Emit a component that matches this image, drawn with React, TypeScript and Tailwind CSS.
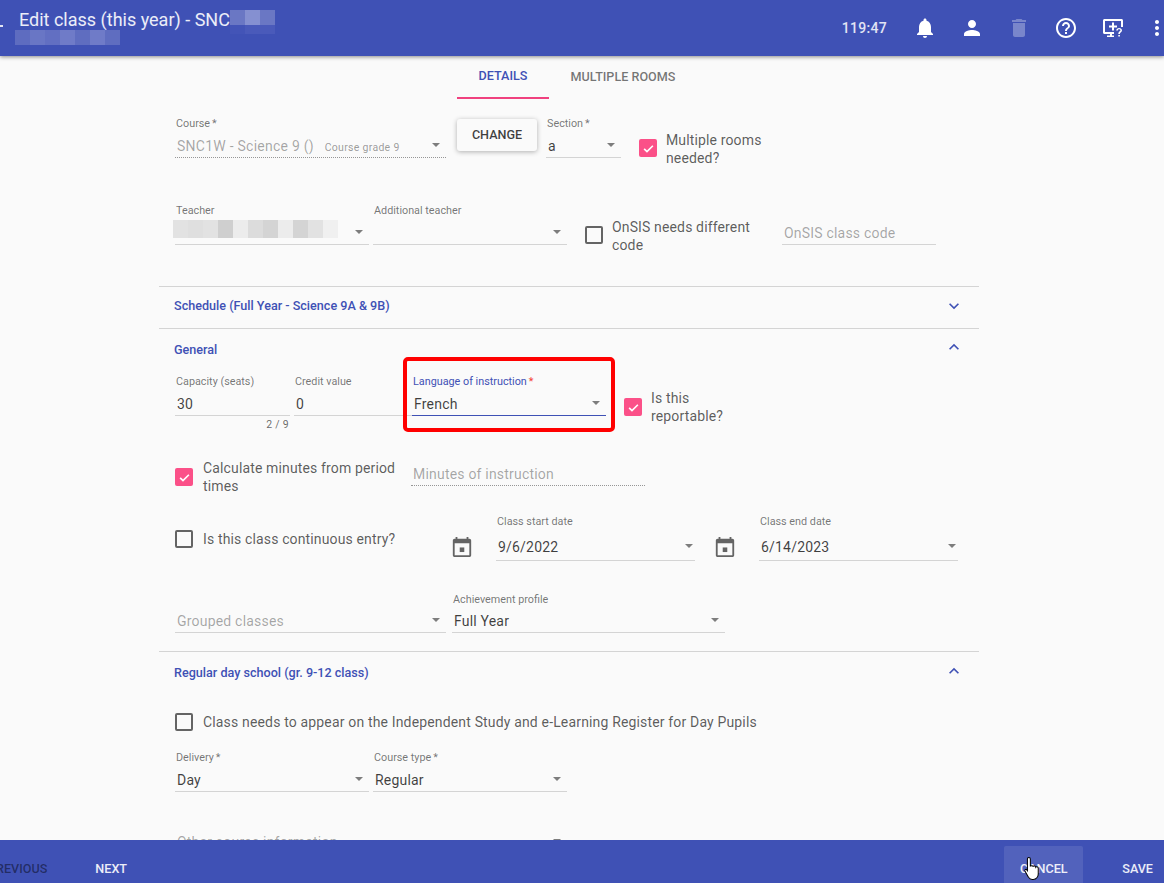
import type { ReactNode } from 'react';

const Arrow = ({ className = '' }: { className?: string }) => (
  <span className={`w-0 h-0 mt-[-4px] border-x-[4.5px] border-x-transparent border-t-[4.5px] border-t-black/50 ${className}`} />
);

const Checkbox = ({ checked = false, className = '' }: { checked?: boolean; className?: string }) =>
  checked ? (
    <span className={`flex items-center justify-center w-[18px] h-[18px] shrink-0 rounded-[2px] bg-[#fb5088] ${className}`}>
      <svg viewBox="0 0 24 24" className="w-[15px] h-[15px]" fill="none" stroke="#fff" strokeWidth="2.6">
        <path d="M5 12.5l4.6 4.6L19 7.6" />
      </svg>
    </span>
  ) : (
    <span className={`block w-[18px] h-[18px] shrink-0 rounded-[2px] border-2 border-black/60 ${className}`} />
  );

type FieldProps = {
  label?: string;
  value?: ReactNode;
  placeholder?: string;
  required?: boolean;
  arrow?: boolean;
  dotted?: boolean;
  focused?: boolean;
  className?: string;
};

const Field = ({ label, value, placeholder, required, arrow = true, dotted, focused, className = '' }: FieldProps) => (
  <div className={`shrink-0 ${className}`}>
    <div className={`h-[14px] pl-[1px] leading-[14px] text-[10.8px] whitespace-nowrap ${focused ? 'text-[#3f51b5]' : 'text-black/55'}`}>
      {label}
      {required && <span className={`ml-[2px] ${focused ? 'text-[#f44336]' : ''}`}>*</span>}
    </div>
    <div
      className={`flex items-center h-[27px] pl-[2px] pr-[6px] pt-[5px] text-[14px] border-b ${
        dotted ? 'border-dotted border-black/40' : focused ? 'border-[#3f51b5]' : 'border-black/15'
      }`}
    >
      <span className={`flex-1 whitespace-nowrap ${placeholder ? 'text-black/35 tracking-[0.2px]' : 'text-black/75 tracking-[0.2px]'}`}>
        {value ?? placeholder}
      </span>
      {arrow && <Arrow />}
    </div>
  </div>
);

const Blur = ({ colors, className = '' }: { colors: string[]; className?: string }) => (
  <span className={`flex ${className}`}>
    {colors.map((c, i) => (
      <span key={i} className="block w-[15px] h-full" style={{ backgroundColor: c }} />
    ))}
  </span>
);

const SectionHead = ({
  title,
  up = false,
  className = '',
  titleClass = '',
  chevronClass = 'pb-[4px]',
}: {
  title: string;
  up?: boolean;
  className?: string;
  titleClass?: string;
  chevronClass?: string;
}) => (
  <div className={`flex items-center pl-[15px] text-[12.6px] font-medium text-[#3f51b5] ${className}`}>
    <span className={titleClass}>{title}</span>
    <span className={`ml-auto mr-[15px] ${chevronClass}`}>
      <svg viewBox="0 0 24 24" className="block w-[20px] h-[20px]" fill="#3f51b5">
        <path d={up ? 'M12 8l-6 6 1.41 1.41L12 10.83l4.59 4.58L18 14z' : 'M16.59 8.59L12 13.17 7.41 8.59 6 10l6 6 6-6z'} />
      </svg>
    </span>
  </div>
);

const CalendarIcon = ({ className = '' }: { className?: string }) => (
  <svg viewBox="0 0 24 24" className={`w-[22px] h-[22px] shrink-0 ${className}`} fill="#000" fillOpacity="0.6">
    <path d="M20 3h-1V1h-2v2H7V1H5v2H4c-1.1 0-2 .9-2 2v16c0 1.1.9 2 2 2h16c1.1 0 2-.9 2-2V5c0-1.1-.9-2-2-2zm0 18H4V8h16v13z" />
    <path d="M9.5 12.5h5v5h-5z" />
  </svg>
);

const TopIcon = ({ d, className = '' }: { d: string; className?: string }) => (
  <svg viewBox="0 0 24 24" className={`w-[24px] h-[24px] ${className}`} fill="#fff">
    <path d={d} />
  </svg>
);

const App = () => {
  return (
    <div className="relative flex flex-col h-[883px] overflow-hidden bg-[#fafafa] font-['Roboto',sans-serif]">
      {/* Top bar */}
      <header className="relative z-10 flex items-center h-[56px] shrink-0 bg-[#3f51b5] text-white/90 shadow-[0_1px_4px_rgba(0,0,0,0.45)]">
        <span className="absolute left-0 top-[25px] w-[3px] h-[2px] bg-white/85" />
        <div className="ml-[15px] w-[300px]">
          <div className="flex items-start h-[20px] mt-[-1px]">
            <span className="ml-[4px] text-[18px] leading-[20px] whitespace-nowrap">Edit class (this year) - SNC</span>
            <div className="flex flex-col">
              <Blur colors={['#6a77c4', '#8590d1', '#6a77c4']} className="h-[15px]" />
              <Blur colors={['#4354b7', '#4a5aba', '#4a5aba']} className="h-[9px]" />
            </div>
          </div>
          <Blur colors={['#5e6cc0', '#6976c5', '#626fc2', '#6f7bc8', '#5f6dc0', '#6f7bc8', '#5f6dc0']} className="h-[15px]" />
        </div>
        <div className="ml-auto flex items-center">
          <span className="text-[14px] font-medium tracking-[0.3px] text-white/85 mr-[26px]">119:47</span>
          <TopIcon className="mr-[23px]" d="M12 22c1.1 0 2-.9 2-2h-4c0 1.1.89 2 2 2zm6-6v-5c0-3.07-1.64-5.64-4.5-6.32V4c0-.83-.67-1.5-1.5-1.5s-1.5.67-1.5 1.5v.68C7.63 5.36 6 7.92 6 11v5l-2 2v1h16v-1l-2-2z" />
          <TopIcon className="mr-[23px]" d="M12 12c2.21 0 4-1.79 4-4s-1.79-4-4-4-4 1.79-4 4 1.79 4 4 4zm0 2c-2.67 0-8 1.34-8 4v2h16v-2c0-2.66-5.33-4-8-4z" />
          <TopIcon className="mr-[23px] opacity-30" d="M6 19c0 1.1.9 2 2 2h8c1.1 0 2-.9 2-2V7H6v12zM19 4h-3.5l-1-1h-5l-1 1H5v2h14V4z" />
          <TopIcon className="mr-[23px]" d="M11 18h2v-2h-2v2zm1-16C6.48 2 2 6.48 2 12s4.48 10 10 10 10-4.48 10-10S17.52 2 12 2zm0 18c-4.41 0-8-3.59-8-8s3.59-8 8-8 8 3.59 8 8-3.59 8-8 8zm0-14c-2.21 0-4 1.79-4 4h2c0-1.1.9-2 2-2s2 .9 2 2c0 2-3 1.75-3 5h2c0-2.25 3-2.5 3-5 0-2.21-1.79-4-4-4z" />
          <svg viewBox="0 0 24 24" className="w-[24px] h-[24px] mr-[20px]" fill="#fff">
            <path d="M3.5 3h17c.8 0 1.5.7 1.5 1.5V11h-2V5H4v11h9v2h-2v1.5h2V21H6v-1.5h3V18H3.5c-.8 0-1.5-.7-1.5-1.5v-12C2 3.7 2.7 3 3.5 3z" />
            <path d="M11 6.5h2v3h3v2h-3v3h-2v-3H8v-2h3z" />
            <path d="M15.2 14.5c.1-1.6 1.3-2.6 2.9-2.6s2.9 1 2.9 2.4c0 1.9-2.1 2-2.1 3.7h-1.6c0-2.5 2.1-2.5 2.1-3.7 0-.6-.6-1-1.3-1s-1.2.4-1.3 1.2zM17.3 19h1.6v1.6h-1.6z" />
          </svg>
          <TopIcon className="mr-[-5px]" d="M12 8c1.1 0 2-.9 2-2s-.9-2-2-2-2 .9-2 2 .9 2 2 2zm0 2c-1.1 0-2 .9-2 2s.9 2 2 2 2-.9 2-2-.9-2-2-2zm0 6c-1.1 0-2 .9-2 2s.9 2 2 2 2-.9 2-2-.9-2-2-2z" />
        </div>
      </header>

      {/* Tabs */}
      <div className="flex h-[43px] shrink-0 pl-[457px] text-[12.6px] font-medium">
        <div className="flex items-center justify-center w-[92px] pb-[1px] border-b-2 border-[#f0417f] text-[#3f51b5]">DETAILS</div>
        <div className="flex items-center justify-center w-[148px] pb-[1px] text-black/55">MULTIPLE ROOMS</div>
      </div>

      {/* Form, cut off by the bottom bar */}
      <main className="flex-1 min-h-0 overflow-hidden ml-[159px] w-[820px]">
        <div className="flex items-start h-[42px] mt-[18px] pl-[16px]">
          <Field
            className="w-[271px]"
            label="Course"
            required
            dotted
            value={
              <span className="text-black/35 tracking-[0.25px]">
                SNC1W - Science 9 () <span className="ml-[7px] text-[10.5px] tracking-[0.3px] text-black/40">Course grade 9</span>
              </span>
            }
          />
          <button className="w-[80px] h-[32px] ml-[11px] mt-[2px] rounded-[3px] bg-[#fafafa] text-[12.6px] font-medium text-black/75 shadow-[0_1px_5px_rgba(0,0,0,0.3)]">
            CHANGE
          </button>
          <Field className="w-[75px] ml-[9px]" label="Section" required value="a" />
          <Checkbox checked className="ml-[18px] mt-[22px]" />
          <span className="ml-[9px] mt-[14px] w-[110px] text-[14px] leading-[18px] text-black/65 tracking-[0.14px]">Multiple rooms needed?</span>
        </div>

        <div className="flex items-start h-[42px] mt-[45px] pl-[16px]">
          <Field
            className="w-[194px]"
            label="Teacher"
            value={<Blur className="h-[18px] ml-[-4px] mt-[-10px]" colors={['#e2e2e2', '#dfdfdf', '#e2e2e2', '#cfcfcf', '#ececec', '#dcdcdc', '#d4d4d4', '#ececec', '#d4d4d4', '#e2e2e2', '#f0f0f0']} />}
          />
          <Field className="w-[194px] ml-[4px]" label="Additional teacher" value=" " />
          <Checkbox className="ml-[18px] mt-[22px]" />
          <span className="ml-[9px] mt-[14px] w-[160px] text-[14px] leading-[18px] text-black/65 tracking-[0.14px]">OnSIS needs different code</span>
          <Field className="w-[154px] ml-[10px]" placeholder="OnSIS class code" arrow={false} />
        </div>

        <SectionHead className="h-[42px] mt-[40px] border-t border-black/15" titleClass="pb-[2px]" title="Schedule (Full Year - Science 9A & 9B)" />
        <SectionHead className="h-[41px] border-t border-black/15" titleClass="pt-[2px]" title="General" up />

        <div className="flex items-start h-[42px] mt-[6px] pl-[16px]">
          <div className="shrink-0 w-[115px]">
            <Field label="Capacity (seats)" value="30" arrow={false} />
            <div className="mt-[3px] pr-[1px] text-right text-[10.5px] leading-[12px] tracking-[0.3px] text-black/60">2 / 9</div>
          </div>
          <Field className="w-[118px] ml-[4px]" label="Credit value" value="0" arrow={false} />
          <Field className="w-[194px]" label="Language of instruction" required focused value="French" />
          <Checkbox checked className="ml-[18px] mt-[23px]" />
          <span className="ml-[9px] mt-[14px] w-[90px] text-[14px] leading-[18px] text-black/65 tracking-[0.14px]">Is this reportable?</span>
        </div>

        <div className="flex items-start h-[42px] mt-[28px] pl-[16px]">
          <Checkbox checked className="mt-[23px]" />
          <span className="ml-[10px] mt-[14px] w-[205px] text-[14px] leading-[18px] text-black/65 tracking-[0.14px]">Calculate minutes from period times</span>
          <Field className="w-[234px] ml-[3px]" placeholder="Minutes of instruction" arrow={false} dotted />
        </div>

        <div className="flex items-start h-[46px] mt-[28px] pl-[16px]">
          <Checkbox className="mt-[15px]" />
          <span className="ml-[10px] mt-[15px] w-[248px] text-[14px] leading-[18px] text-black/65 tracking-[0.14px]">Is this class continuous entry?</span>
          <CalendarIcon className="mt-[21px] mr-[23px]" />
          <Field className="w-[199px] [&>div:last-child]:h-[32px] [&>div:last-child]:pt-[6px] [&>div:last-child]:pr-[2px]" label="Class start date" value="9/6/2022" />
          <CalendarIcon className="ml-[19px] mt-[21px] mr-[23px]" />
          <Field className="w-[199px] [&>div:last-child]:h-[32px] [&>div:last-child]:pt-[6px] [&>div:last-child]:pr-[2px]" label="Class end date" value="6/14/2023" />
        </div>

        <div className="flex items-start h-[42px] mt-[32px] pl-[16px]">
          <Field className="w-[271px] [&>div:last-child]:h-[26px] [&>div:last-child]:pt-[4px]" placeholder="Grouped classes" />
          <Field className="w-[273px] ml-[6px] [&>div:last-child]:h-[26px] [&>div:last-child]:pt-[4px]" label="Achievement profile" value="Full Year" />
        </div>

        <SectionHead className="h-[41px] mt-[16px] border-t border-black/15" titleClass="pt-[2px]" chevronClass="pb-[2px]" title="Regular day school (gr. 9-12 class)" up />

        <div className="flex items-center h-[18px] mt-[21px] pl-[16px]">
          <Checkbox />
          <span className="ml-[10px] text-[14px] text-black/65 tracking-[0.16px] whitespace-nowrap">Class needs to appear on the Independent Study and e-Learning Register for Day Pupils</span>
        </div>

        <div className="flex items-start h-[42px] mt-[20px] pl-[16px]">
          <Field className="w-[194px]" label="Delivery" required value="Day" />
          <Field className="w-[194px] ml-[4px]" label="Course type" required value="Regular" />
        </div>

        <div className="flex items-start mt-[20px] pl-[16px]">
          <Field className="w-[392px]" placeholder="Other course information" />
        </div>
      </main>

      {/* Bottom bar */}
      <footer className="relative z-10 flex items-center h-[43px] shrink-0 pt-[15px] bg-[#3f51b5] text-[12.6px] font-medium">
        <span className="ml-[-12px] text-black/45">PREVIOUS</span>
        <span className="ml-[48px] text-white/90">NEXT</span>
        <div className="ml-auto self-stretch mt-[-9px] flex items-center justify-center pt-[10px] w-[79px] rounded-t-[2px] bg-white/10 text-white/90">CANCEL</div>
        <span className="ml-[39px] mr-[11px] text-white/90">SAVE</span>
      </footer>

      {/* Annotation over the form */}
      <div className="absolute left-[403px] top-[357px] w-[212px] h-[75px] z-20 rounded-[5px] border-[4px] border-[#ff0000]" />

      {/* Mouse pointer */}
      <svg viewBox="0 0 16 24" className="absolute left-[1023px] top-[856px] w-[18px] h-[25px] z-30" fill="#fff" stroke="#000" strokeWidth="1">
        <path d="M5 1.5c.8 0 1.4.6 1.4 1.4V10c.1-.9 2.5-1 2.7.2.2-.8 2.3-.8 2.5.5.3-.6 2.2-.5 2.4 1v5.5c0 2.8-1.9 5.3-4.8 5.3H8.2c-1.6 0-2.7-.8-3.6-2.1L1.2 14.5c-.6-1.2.9-2.2 1.9-1.2l.5.7V2.9c0-.8.6-1.4 1.4-1.4z" />
      </svg>
    </div>
  );
};

export default App;
